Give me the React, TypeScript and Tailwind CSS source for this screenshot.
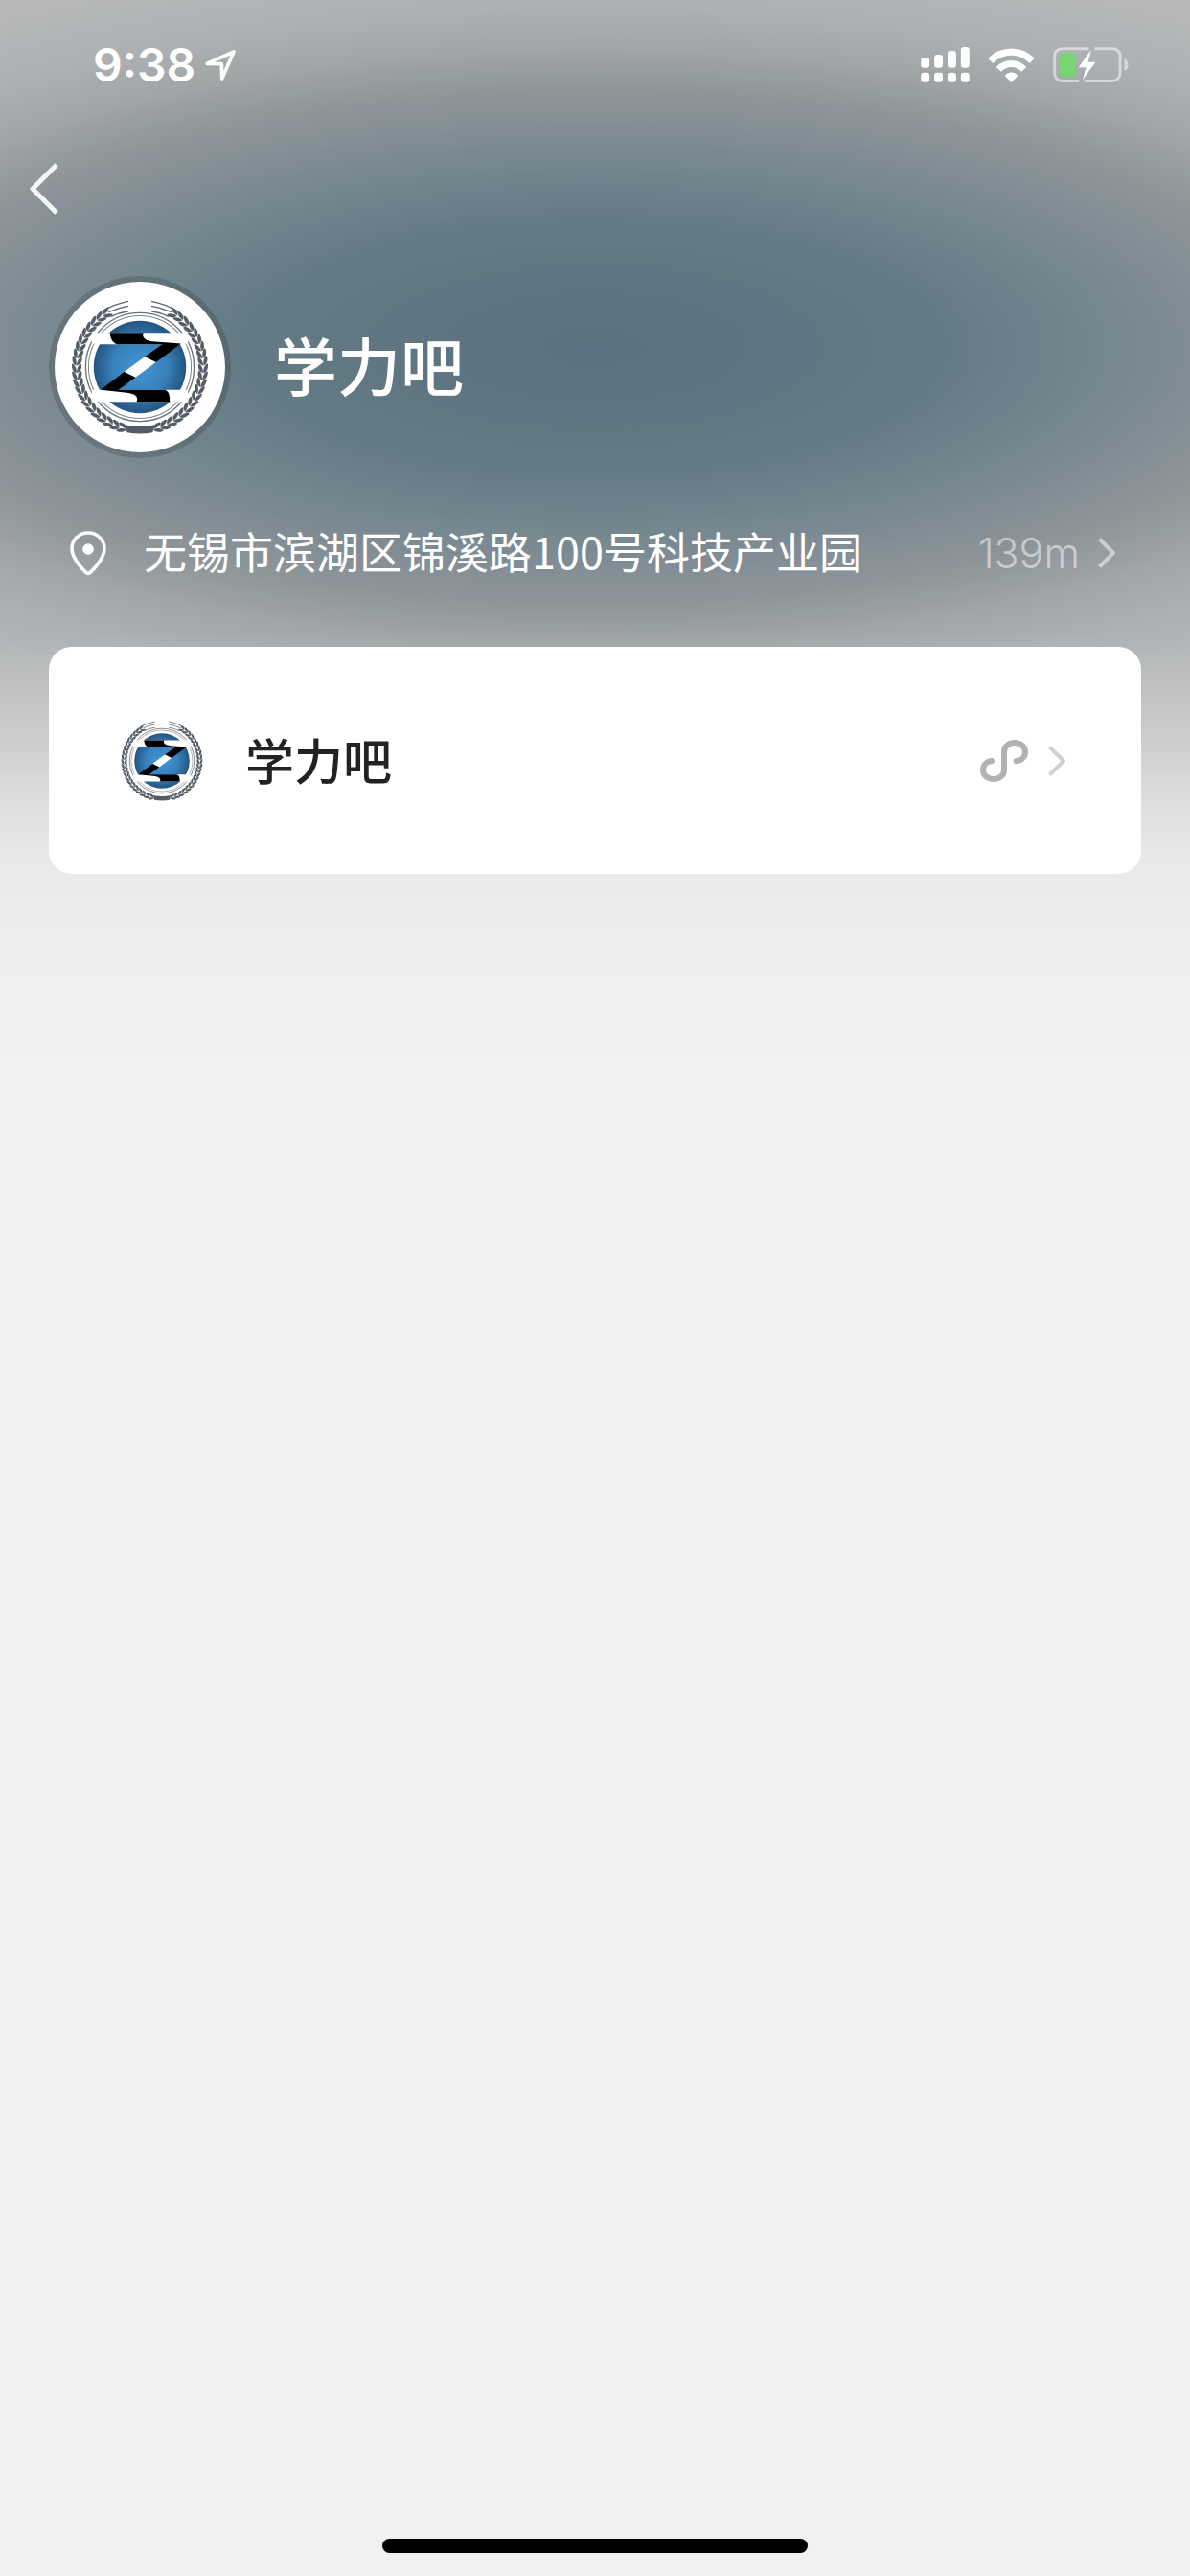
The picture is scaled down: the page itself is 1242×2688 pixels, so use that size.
import { useId } from "react";

const shopName = "学力吧";
const address = "无锡市滨湖区锦溪路100号科技产业园";
const distance = "139m";

const LEAF_COUNT = 21;
const leafAngles = Array.from({ length: LEAF_COUNT }, (_, index) => 17 + index * 6.6);

export default function App() {
  return (
    <div className="flex min-h-screen flex-col bg-[#f1f1f1] bg-[linear-gradient(to_bottom,#f1f1f100_660px,#f1f1f14d_770px,#f1f1f1a6_840px,#f1f1f1d9_900px,#f1f1f1f2_990px,#f1f1f1_1100px),radial-gradient(ellipse_100%_450px_at_50%_362px,#5b7181_0%,#5f7581_17%,#657b84_30%,#75878f_43%,#838e96_52%,#8d9599_59%,#a0a5a6_69%,#adb1b3_79%,#b8b9ba_94%,#bcbcbc_100%)] font-['Inter','Noto_Sans_CJK_SC',sans-serif] text-white">
      <StatusBar />
      <nav className="flex h-[130px] items-center px-[31px]">
        <button type="button" aria-label="返回">
          <svg className="h-[54px] w-[30px]" viewBox="0 0 30 54" fill="none" stroke="#f3f5f6" strokeWidth="5" aria-hidden="true">
            <path d="M28 2L3 27L28 52" strokeLinejoin="round" />
          </svg>
        </button>
      </nav>

      <main className="px-[51px]">
        <header className="flex items-center gap-[45px] pt-[26px]">
          <div className="flex h-[190px] w-[190px] items-center justify-center rounded-full border-6 border-black/15 bg-white bg-clip-padding">
            <ShopLogo className="h-36 w-36" />
          </div>
          <h1 className="pb-2 font-['Noto_Sans_CJK_SC',sans-serif] text-[66px] leading-[80px] font-medium">{shopName}</h1>
        </header>

        <a href="#map" className="flex h-[197px] items-center pr-[26px] pl-[21px]">
          <svg className="h-[48px] w-[40px] shrink-0" viewBox="0 0 40 48" fill="none" aria-hidden="true">
            <path
              d="M20 45.5C18 45.5 3 30.5 3 19.5C3 10 10.6 3 20 3C29.400 3 37 10 37 19.500C37 30.500 22 45.500 20 45.500Z"
              stroke="white"
              strokeWidth="3.6"
            />
            <circle cx="20" cy="20" r="5.800" fill="white" />
          </svg>
          <span className="ml-[38px] pb-1 font-['Noto_Sans_CJK_SC',sans-serif] text-[45px] leading-[60px]">{address}</span>
          <span className="ml-auto text-[43px] leading-[60px] font-light text-white/50">{distance}</span>
          <Chevron className="ml-[18px] text-white/50" />
        </a>

        <button
          type="button"
          className="flex h-[237px] w-full items-center rounded-3xl bg-white pr-[78px] pl-[75px] text-left text-[#222222]"
        >
          <ShopLogo className="h-[86px] w-[86px]" />
          <span className="ml-[44px] pb-1 font-['Noto_Sans_CJK_SC',sans-serif] text-[51px] leading-[64px] font-medium">{shopName}</span>
          <svg className="ml-auto h-[44px] w-[50px]" viewBox="0 0 150 132" fill="none" aria-hidden="true">
            <path
              d="M36 66C20 68 9 80 9 95C9 111 23 123 42 123C61 123 75 111 75 95V38C75 21 89 9 108 9C127 9 141 22 141 38C141 53 130 65 113 66"
              stroke="#b2b2b2"
              strokeWidth="18"
              strokeLinecap="round"
            />
          </svg>
          <Chevron className="ml-5 text-[#d0d0d0]" />
        </button>
      </main>

      <div className="mx-auto mt-auto mb-6 h-[15px] w-[444px] rounded-full bg-black" />
    </div>
  );
}

function StatusBar() {
  return (
    <div className="flex h-[132px] items-center justify-between pt-[3px] pr-[64px] pl-[97px]">
      <div className="flex items-center gap-[10px]">
        <span className="text-[48px] leading-[60px] font-semibold">9:38</span>
        <svg className="h-[32px] w-[32px]" viewBox="0 0 96 96" fill="none" aria-hidden="true">
          <path d="M6 43L90 6L53 90L52 44Z" stroke="white" strokeWidth="11" strokeLinejoin="round" />
        </svg>
      </div>
      <div className="flex items-center gap-[19px]">
        <svg className="h-[37px] w-[51px]" viewBox="0 0 153 112" fill="white" aria-hidden="true">
          <rect x="0" y="33" width="27" height="33" rx="9" />
          <rect x="42" y="24" width="27" height="42" rx="9" />
          <rect x="84" y="12" width="27" height="54" rx="9" />
          <rect x="126" y="0" width="27" height="66" rx="9" />
          <rect x="0" y="81" width="27" height="30" rx="9" />
          <rect x="42" y="81" width="27" height="30" rx="9" />
          <rect x="84" y="81" width="27" height="30" rx="9" />
          <rect x="126" y="81" width="27" height="30" rx="9" />
        </svg>
        <svg className="h-[36px] w-[49px]" viewBox="0 0 147 108" fill="none" aria-hidden="true">
          <path d="M8 40C45 3 102 3 139 40" stroke="white" strokeWidth="22" />
          <path d="M34 67C56 44 91 44 113 67" stroke="white" strokeWidth="21" />
          <path d="M73.500 108L53 87C64 73 83 73 94 87Z" fill="white" />
        </svg>
        <svg className="h-[37px] w-[79px]" viewBox="0 0 238 112" fill="none" aria-hidden="true">
          <path
            d="M82 107.500H30C14 107.500 4.500 98 4.500 82V30C4.500 14 14 5.500 30 5.500H112M131 5.500H186C202 5.500 211.500 14 211.500 30V82C211.500 98 202 107.500 186 107.500H99"
            stroke="white"
            strokeOpacity="0.5"
            strokeWidth="9"
          />
          <path d="M225 36Q237 42 237 56Q237 70 225 76Z" fill="white" fillOpacity="0.5" />
          <path d="M30 20H60Q72 20 72 32V62Q69 66 66 70Q72 72 72 82Q72 94 60 94H30Q18 94 18 82V32Q18 20 30 20Z" fill="#76d672" />
          <path d="M120 9L80 64H104L93 104L134 48H110Z" fill="white" />
        </svg>
      </div>
    </div>
  );
}

function Chevron({ className }: { className: string }) {
  return (
    <svg className={`h-[34px] w-[20px] shrink-0 ${className}`} viewBox="0 0 20 34" fill="none" stroke="currentColor" strokeWidth="4" aria-hidden="true">
      <path d="M2.500 2.500L17 17L2.500 31.500" strokeLinejoin="round" />
    </svg>
  );
}

// One half of the wreath: leaf pairs climbing from the ribbon to the grain lines.
function WreathHalf() {
  return (
    <>
      {leafAngles.map((angle) => (
        <g key={angle} transform={`rotate(${angle})`}>
          <path d="M17 198C15 207 6 213 -10 212L-13 209C-6 201 3 197 17 198Z" />
          <path d="M17 197C12 185 4 181 -8 182L-12 185C-6 193 4 197 17 197Z" />
        </g>
      ))}
      <g fill="none" stroke="#5b646c" strokeWidth="4">
        <path d="M-36 -205C-66 -199 -90 -190 -116 -175" />
        <path d="M-36 -190C-56 -187 -76 -181 -98 -171" />
        <path d="M-36 -174C-56 -171 -72 -166 -90 -157" />
      </g>
    </>
  );
}

function ShopLogo({ className }: { className: string }) {
  const globeId = useId();

  return (
    <svg className={`shrink-0 ${className}`} viewBox="-215 -215 430 430" role="img" aria-label={shopName}>
      <defs>
        <radialGradient id={globeId}>
          <stop offset="0" stopColor="#4296d8" />
          <stop offset="0.6" stopColor="#3880ba" />
          <stop offset="1" stopColor="#235580" />
        </radialGradient>
      </defs>
      <g fill="#535c64">
        <WreathHalf />
        <g transform="scale(-1 1)">
          <WreathHalf />
        </g>
        <path d="M-46 180Q0 190 46 180L40 204Q0 211 -40 204Z" />
      </g>
      <circle r="169" fill="white" stroke="#6b737b" strokeWidth="4" />
      <circle r="160" fill="none" stroke="#7e868d" strokeWidth="3" />
      <circle r="144" fill={`url(#${globeId})`} />
      <path d="M-150 -107H150V-71H-150ZM-150 71H150V108H-150Z" fill="white" />
      <path d="M-93 -107H11C5 -92 17 -81 48 -79L128 -73L50 -15L15 -32L70 -71H-70C-85 -75 -93 -91 -93 -107Z" fill="black" />
      <path d="M15 -32L50 -15L-14 32L-49 15Z" fill="white" />
      <path d="M-49 15L-14 32L-67 71H78C91 75 94 92 93 108H-10C-4 92 -14 82 -47 79L-122 71Z" fill="black" />
    </svg>
  );
}
